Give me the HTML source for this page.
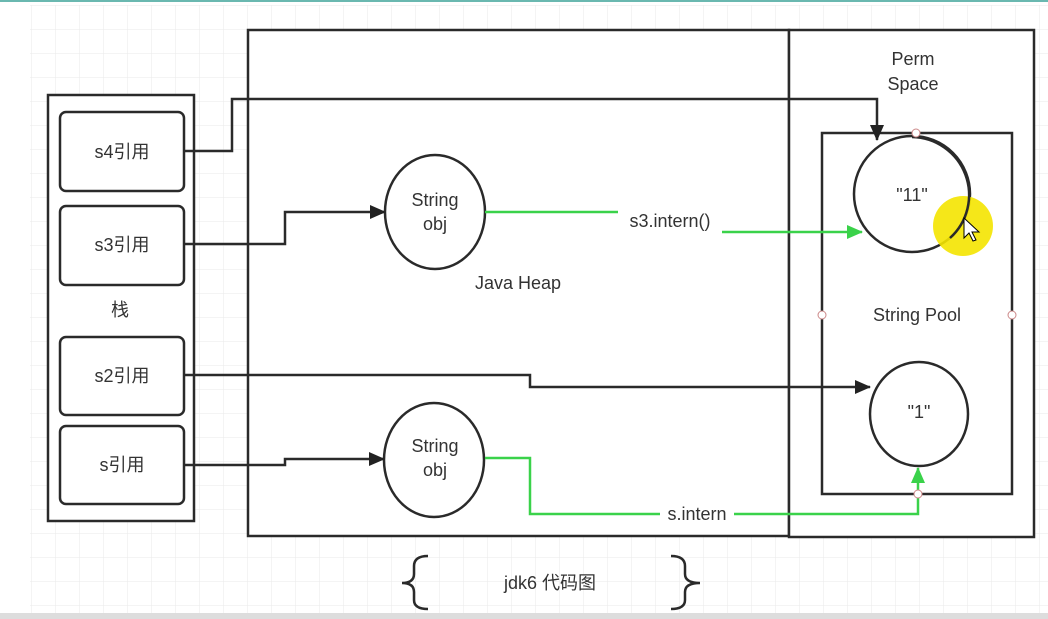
<!DOCTYPE html><html><head><meta charset="utf-8"><style>body{margin:0;background:#fff}svg{display:block}text{font-family:"Liberation Sans","Noto Sans CJK SC",sans-serif;fill:#333}</style></head><body>
<svg width="1048" height="619" viewBox="0 0 1048 619" xmlns="http://www.w3.org/2000/svg">
<defs><pattern id="g" width="24" height="24" patternUnits="userSpaceOnUse" x="8" y="6"><path d="M24 0V24M0 24H24" stroke="#eaeaea" stroke-width="1" fill="none"/></pattern>
<marker id="a" markerWidth="16" markerHeight="14" refX="15" refY="7" orient="auto" markerUnits="userSpaceOnUse"><path d="M0 0L16 7L0 14Z" fill="#222"/></marker>
<marker id="ga" markerWidth="16" markerHeight="14" refX="15" refY="7" orient="auto" markerUnits="userSpaceOnUse"><path d="M0 0L16 7L0 14Z" fill="#3ad24a"/></marker></defs>
<rect x="30" y="5" width="1018" height="608" fill="url(#g)"/>
<rect x="0" y="0" width="1048" height="2" fill="#6ab8b0"/>
<rect x="0" y="613" width="1048" height="6" fill="#ddd"/>
<g fill="none" stroke="#2a2a2a" stroke-width="2.5">
<rect x="48" y="95" width="146" height="426" fill="#fff"/>
<rect x="60" y="112" width="124" height="79" rx="6"/>
<rect x="60" y="206" width="124" height="79" rx="6"/>
<rect x="60" y="337" width="124" height="78" rx="6"/>
<rect x="60" y="426" width="124" height="78" rx="6"/>
<rect x="248" y="30" width="541" height="506" fill="#fff"/>
<rect x="789" y="30" width="245" height="507" fill="#fff"/>
<rect x="822" y="133" width="190" height="361"/>
<ellipse cx="912" cy="194" rx="58" ry="58"/>
<ellipse cx="919" cy="414" rx="49" ry="52"/>
<ellipse cx="435" cy="212" rx="50" ry="57"/>
<ellipse cx="434" cy="460" rx="50" ry="57"/>
<path d="M184 151H232V99H877V140" marker-end="url(#a)"/>
<path d="M184 244H285V212H385" marker-end="url(#a)"/>
<path d="M184 375H530V387H870" marker-end="url(#a)"/>
<path d="M184 465H285V459H384" marker-end="url(#a)"/>
</g>
<g fill="none" stroke="#3ad24a" stroke-width="2.5">
<path d="M485 212H618"/><path d="M722 232H862" marker-end="url(#ga)"/>
<path d="M485 458H530V514H660"/><path d="M734 514H918V468" marker-end="url(#ga)"/>
</g>
<circle cx="963" cy="226" r="30" fill="#f4e400" opacity="0.9"/>
<path d="M912 137A58 58 0 0 1 950 238" stroke="#2a2a2a" stroke-width="2.5" fill="none"/>
<path d="M964 218l0 20l5-5l4 8l3-1l-4-8l7 0z" fill="#fff" stroke="#000" stroke-width="1"/>
<g fill="#fff" stroke="#c88" stroke-width="1"><circle cx="916" cy="133" r="4"/><circle cx="822" cy="315" r="4"/><circle cx="1012" cy="315" r="4"/><circle cx="918" cy="494" r="4"/></g>
<g font-size="18" text-anchor="middle">
<text x="122" y="158">s4引用</text><text x="122" y="251">s3引用</text><text x="122" y="382">s2引用</text><text x="122" y="471">s引用</text>
<text x="120" y="316">栈</text>
<text x="435" y="206">String</text><text x="435" y="230">obj</text>
<text x="435" y="452">String</text><text x="435" y="476">obj</text>
<text x="518" y="289">Java Heap</text>
<text x="670" y="227">s3.intern()</text>
<text x="697" y="520">s.intern</text>
<text x="913" y="65">Perm</text><text x="913" y="90">Space</text>
<text x="917" y="321">String Pool</text>
<text x="912" y="201">"11"</text><text x="919" y="418">"1"</text>
<text x="550" y="589">jdk6 代码图</text>
</g>
<g fill="none" stroke="#2a2a2a" stroke-width="2.5">
<path d="M428 556Q414 556 414 566V574Q414 583 402 583Q414 583 414 592V600Q414 609 428 609"/>
<path d="M671 556Q685 556 685 566V574Q685 583 700 583Q685 583 685 592V600Q685 609 671 609"/>
</g>
</svg></body></html>
